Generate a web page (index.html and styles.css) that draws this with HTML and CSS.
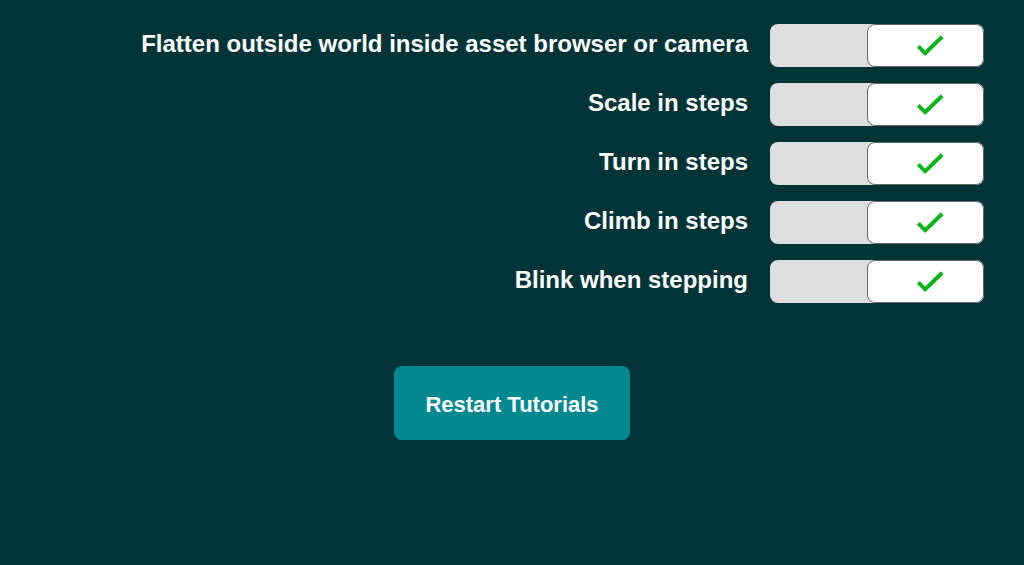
FILE: index.html
```html
<!DOCTYPE html>
<html lang="en">
<head>
<meta charset="utf-8">
<title>Settings</title>
<link rel="stylesheet" href="styles.css">
</head>
<body>
<main class="settings">
  <div class="options">
    <label class="option"><span class="option-label">Flatten outside world inside asset browser or camera</span><span class="switch"><input class="switch-input" type="checkbox" checked><span class="thumb"><svg class="check" viewBox="0 0 28 22" aria-hidden="true"><path d="M2.300 11.400 L9.200 18.300 L26.200 1.800"/></svg></span></span></label>
    <label class="option"><span class="option-label">Scale in steps</span><span class="switch"><input class="switch-input" type="checkbox" checked><span class="thumb"><svg class="check" viewBox="0 0 28 22" aria-hidden="true"><path d="M2.300 11.400 L9.200 18.300 L26.200 1.800"/></svg></span></span></label>
    <label class="option"><span class="option-label">Turn in steps</span><span class="switch"><input class="switch-input" type="checkbox" checked><span class="thumb"><svg class="check" viewBox="0 0 28 22" aria-hidden="true"><path d="M2.300 11.400 L9.200 18.300 L26.200 1.800"/></svg></span></span></label>
    <label class="option"><span class="option-label">Climb in steps</span><span class="switch"><input class="switch-input" type="checkbox" checked><span class="thumb"><svg class="check" viewBox="0 0 28 22" aria-hidden="true"><path d="M2.300 11.400 L9.200 18.300 L26.200 1.800"/></svg></span></span></label>
    <label class="option"><span class="option-label">Blink when stepping</span><span class="switch"><input class="switch-input" type="checkbox" checked><span class="thumb"><svg class="check" viewBox="0 0 28 22" aria-hidden="true"><path d="M2.300 11.400 L9.200 18.300 L26.200 1.800"/></svg></span></span></label>
  </div>
  <button class="restart" type="button">Restart Tutorials</button>
</main>
</body>
</html>
```
FILE: styles.css
```css
* { box-sizing: border-box; }

body {
  margin: 0;
  min-height: 100vh;
  background: #013437;
  color: #fff;
  font-family: "Liberation Sans", Arial, sans-serif;
  font-weight: 700;
}

.settings {
  display: flex;
  flex-direction: column;
  align-items: center;
  gap: 63px;
  padding: 24px 40px;
}

.options {
  display: flex;
  flex-direction: column;
  gap: 16px;
  width: 100%;
}

.option {
  display: flex;
  justify-content: flex-end;
  align-items: center;
  gap: 22px;
  cursor: pointer;
}

.option-label {
  padding-bottom: 4px;
  font-size: 24px;
  line-height: 28px;
  text-align: right;
}

.switch {
  position: relative;
  display: flex;
  flex: none;
  width: 214px;
  height: 43px;
}

.switch-input {
  appearance: none;
  position: absolute;
  inset: 0;
  margin: 0;
  border-radius: 8px;
  background: #dedede;
  cursor: pointer;
}

.thumb {
  position: relative;
  display: flex;
  align-items: center;
  justify-content: center;
  width: 117px;
  border: 1px solid #666;
  border-radius: 8px;
  background: #fff;
  pointer-events: none;
}

.switch-input:checked + .thumb { margin-left: auto; }
.switch-input:not(:checked) + .thumb .check { visibility: hidden; }

.check {
  width: 28px;
  height: 22px;
  margin-left: 9px;
  fill: none;
  stroke: #0ab41a;
  stroke-width: 4;
}

.restart {
  padding: 25px 31px 22px;
  border: 0;
  border-radius: 8px;
  background: #008891;
  color: #fff;
  font: 700 22px/27px "Liberation Sans", Arial, sans-serif;
  cursor: pointer;
}
```
